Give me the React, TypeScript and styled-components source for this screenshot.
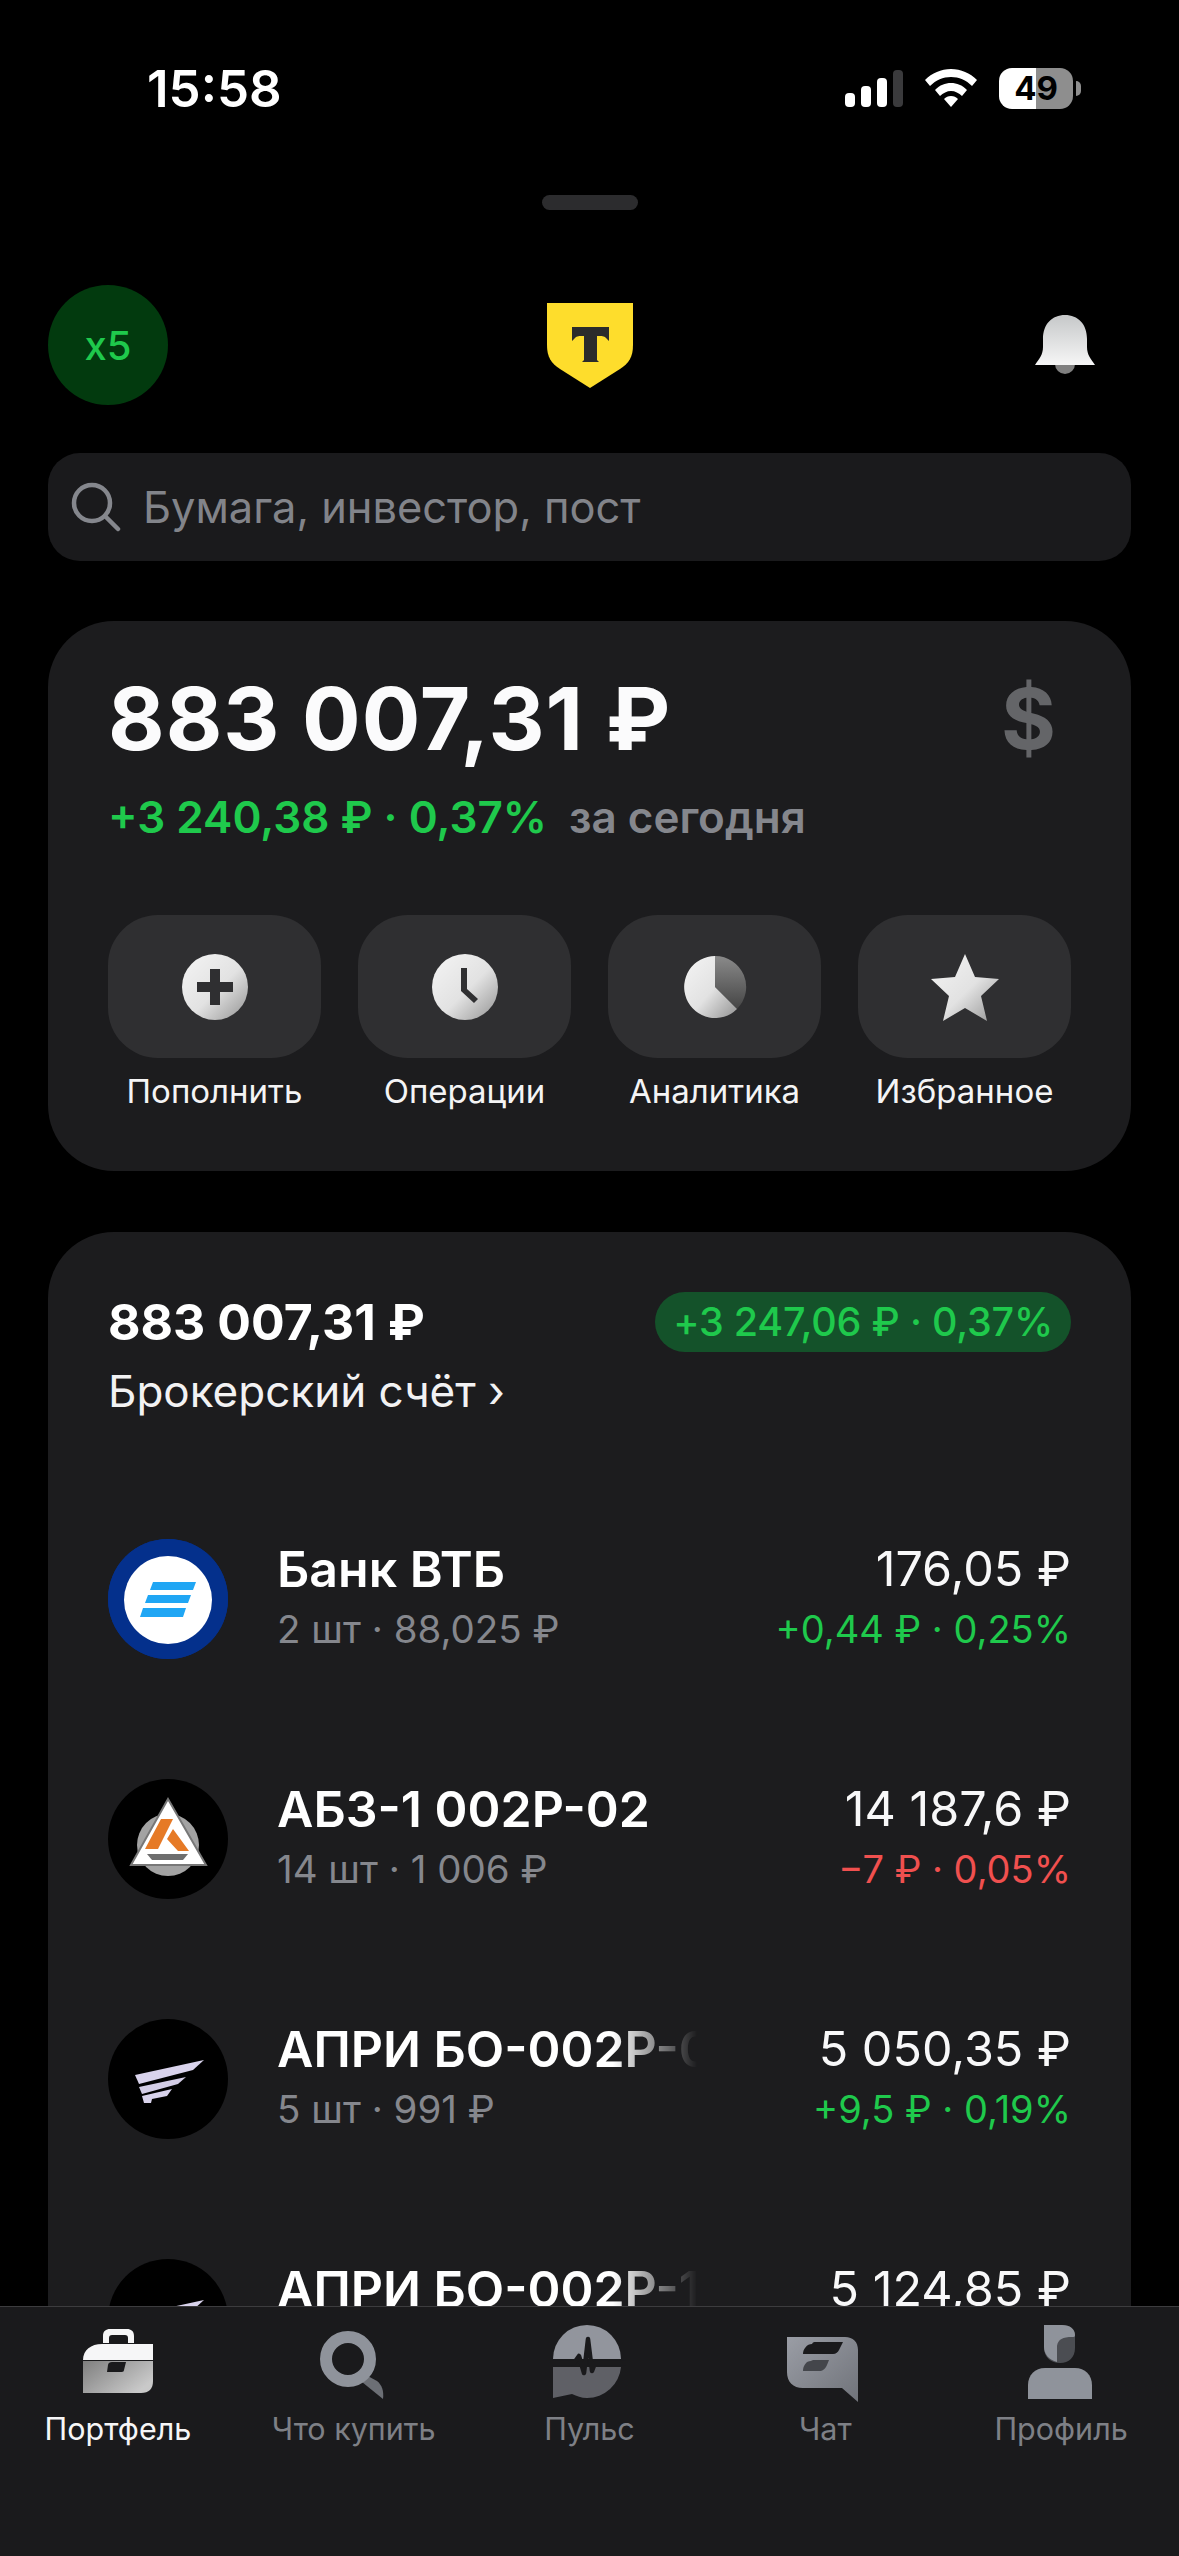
import { FC, ReactNode } from "react";
import styled, { createGlobalStyle } from "styled-components";

const GlobalStyle = createGlobalStyle`
  html, body {
    margin: 0;
    padding: 0;
    background: #000;
  }
  * {
    box-sizing: border-box;
  }
`;

const GREEN = "#1fc94c";
const RED = "#f0504f";
const GREY = "#85878d";

const Screen = styled.div`
  position: relative;
  width: 1179px;
  height: 2556px;
  overflow: hidden;
  background: #000;
  color: #fff;
  font-family: Inter, "Noto Sans", "Liberation Sans", sans-serif;
`;

const StatusBar = styled.div`
  display: flex;
  align-items: center;
  height: 88px;
  margin-top: 44px;
  padding: 0 106px 0 147px;
`;

const Time = styled.div`
  font-size: 51px;
  font-weight: 600;
  margin-right: auto;
`;

const Battery = styled.div`
  position: relative;
  width: 74px;
  height: 41px;
  margin-left: 22px;
  border-radius: 13px;
  background: linear-gradient(to right, #fff 50%, #8e8e8e 50%);
  color: #000;
  font-size: 33px;
  font-weight: 700;
  line-height: 41px;
  text-align: center;

  &::after {
    content: "";
    position: absolute;
    left: 77px;
    top: 13px;
    width: 5px;
    height: 15px;
    border-radius: 0 8px 8px 0;
    background: #8e8e8e;
  }
`;

const Handle = styled.div`
  width: 96px;
  height: 15px;
  margin: 63px auto 0;
  border-radius: 8px;
  background: #2c2c2e;
`;

const Header = styled.header`
  display: grid;
  grid-template-columns: 1fr auto 1fr;
  align-items: center;
  height: 120px;
  margin-top: 75px;
  padding: 0 48px;
`;

const Bonus = styled.div`
  display: flex;
  align-items: center;
  justify-content: center;
  width: 120px;
  height: 120px;
  border-radius: 50%;
  background: #023a0e;
  color: ${GREEN};
  font-size: 40px;
  font-weight: 500;
`;

const BellSlot = styled.div`
  display: flex;
  justify-content: flex-end;
  padding-right: 36px;
`;

const Search = styled.div`
  display: flex;
  align-items: center;
  gap: 22px;
  height: 108px;
  margin: 48px 48px 0;
  padding: 0 23px;
  border-radius: 32px;
  background: #1a1a1c;
  color: #82848a;
  font-size: 43.4px;
`;

const Card = styled.section<{ $top: number }>`
  margin: ${(p) => p.$top}px 48px 0;
  padding: 0 60px;
  border-radius: 66px;
  background: #1c1c1e;
`;

const TotalRow = styled.div`
  display: flex;
  align-items: center;
  justify-content: space-between;
  padding-top: 46px;
  padding-right: 15px;
`;

const Total = styled.div`
  font-size: 87px;
  font-weight: 700;
  line-height: 104px;
  letter-spacing: 1px;
  color: #fbfbfc;
`;

const Currency = styled.div`
  font-size: 84px;
  font-weight: 700;
  line-height: 104px;
  color: #646568;
`;

const TodayRow = styled.div`
  display: flex;
  gap: 22px;
  margin-top: 16px;
  font-size: 44px;
  font-weight: 600;
  line-height: 60px;
`;

const Change = styled.span<{ $color: string }>`
  color: ${(p) => p.$color};
`;

const Actions = styled.div`
  display: grid;
  grid-template-columns: repeat(4, 1fr);
  gap: 37px;
  margin-top: 68px;
  padding-bottom: 59px;
`;

const Action = styled.div`
  display: flex;
  flex-direction: column;
  align-items: center;
  gap: 12px;
`;

const ActionTile = styled.div`
  display: flex;
  align-items: center;
  justify-content: center;
  width: 100%;
  height: 143px;
  border-radius: 50px;
  background: #2f2f31;
`;

const ActionLabel = styled.div`
  font-size: 33px;
  line-height: 42px;
  color: #f4f4f5;
  white-space: nowrap;
`;

const AccountHead = styled.div`
  display: flex;
  align-items: flex-start;
  justify-content: space-between;
  padding-top: 60px;
`;

const AccountTotal = styled.div`
  font-size: 50px;
  font-weight: 700;
  line-height: 60px;
`;

const AccountName = styled.div`
  margin-top: 11px;
  font-size: 44px;
  line-height: 56px;
  color: #f2f2f3;
`;

const Pill = styled.div`
  height: 60px;
  padding: 0 18px;
  border-radius: 30px;
  background: #14522a;
  color: ${GREEN};
  font-size: 39.5px;
  font-weight: 500;
  line-height: 60px;
  letter-spacing: -0.2px;
  white-space: nowrap;
`;

const Holdings = styled.div`
  display: flex;
  flex-direction: column;
  gap: 120px;
  margin-top: 120px;
`;

const Row = styled.div`
  display: flex;
  align-items: center;
  height: 120px;
`;

const Logo = styled.div<{ $bg: string }>`
  display: flex;
  flex: none;
  align-items: center;
  justify-content: center;
  width: 120px;
  height: 120px;
  margin-right: 49px;
  border-radius: 50%;
  background: ${(p) => p.$bg};
`;

const RowText = styled.div`
  min-width: 0;
  flex: 1;
`;

const Name = styled.div<{ $fade?: boolean }>`
  max-width: 420px;
  overflow: hidden;
  font-size: 50px;
  font-weight: 600;
  line-height: 60px;
  white-space: nowrap;
  ${(p) =>
    p.$fade &&
    "mask-image: linear-gradient(to right, #000 80%, transparent 100%);"}
`;

const Sub = styled.div`
  font-size: 38.5px;
  line-height: 60px;
  color: ${GREY};
  white-space: nowrap;
`;

const RowValues = styled.div`
  flex: none;
  text-align: right;
`;

const Price = styled.div`
  font-size: 48.5px;
  line-height: 60px;
  color: #f8f8f9;
`;

const Delta = styled.div<{ $color: string }>`
  font-size: 38px;
  line-height: 60px;
  color: ${(p) => p.$color};
`;

const Nav = styled.nav`
  position: absolute;
  left: 0;
  right: 0;
  bottom: 0;
  display: grid;
  grid-template-columns: repeat(5, 1fr);
  height: 250px;
  padding-top: 17px;
  border-top: 1px solid #3c3c3e;
  background: #1a1a1c;
`;

const NavItem = styled.div`
  display: flex;
  flex-direction: column;
  align-items: center;
`;

const NavLabel = styled.div<{ $active?: boolean }>`
  margin-top: 5px;
  font-size: 30.5px;
  line-height: 40px;
  color: ${(p) => (p.$active ? "#f6f6f7" : "#7e8086")};
`;

const SignalIcon = () => (
  <svg width="58" height="37" viewBox="0 0 58 37">
    <rect x="0" y="23" width="10" height="14" rx="4" fill="#fff" />
    <rect x="16" y="16" width="10" height="21" rx="4" fill="#fff" />
    <rect x="32" y="8" width="10" height="29" rx="4" fill="#fff" />
    <rect x="48" y="0" width="10" height="37" rx="4" fill="#3a3a3c" />
  </svg>
);

const WifiIcon = () => (
  <svg width="52" height="38" viewBox="0 0 52 38" style={{ marginLeft: 22 }}>
    <path d="M26 0c10 0 19 4 26 11l-5 6C41 11 34 8 26 8S11 11 5 17L0 11C7 4 16 0 26 0z" fill="#fff" />
    <path d="M26 14c6 0 11 2 16 7l-5 6c-3-3-7-5-11-5s-8 2-11 5l-5-6c5-5 10-7 16-7z" fill="#fff" />
    <path d="M26 27c3 0 5 1 7 3l-7 8-7-8c2-2 4-3 7-3z" fill="#fff" />
  </svg>
);

const TinkoffLogo = () => (
  <svg width="86" height="85" viewBox="0 0 86 85">
    <path d="M0 0h86v42c0 12-4 18-13 24L43 85 13 66C4 60 0 54 0 42z" fill="#fedd2c" />
    <path d="M25 24h37v14l-3-3c-2-2-4-2-9-2v24l2 2H35l2-2V33c-5 0-7 0-9 2l-3 3z" fill="#2b2b2b" />
  </svg>
);

const BellIcon = () => (
  <svg width="60" height="60" viewBox="0 0 60 60">
    <defs>
      <linearGradient id="bell" x1="0" y1="0" x2="0" y2="1">
        <stop offset="0" stopColor="#c6c8c9" />
        <stop offset="1" stopColor="#f6f6f6" />
      </linearGradient>
    </defs>
    <circle cx="30" cy="49" r="10" fill="#808080" />
    <path d="M30 0c13 0 22 9 22 24v8c0 8 4 12 8 18H0c4-6 8-10 8-18v-8C8 9 17 0 30 0z" fill="url(#bell)" />
  </svg>
);

const SearchGlass = () => (
  <svg width="50" height="50" viewBox="0 0 50 50" fill="none" stroke="#85878d" strokeWidth="4.5" strokeLinecap="round">
    <circle cx="21" cy="21" r="18" />
    <path d="M34 34l13 13" />
  </svg>
);

const Metal: FC<{ id: string; children: ReactNode }> = ({ id, children }) => (
  <svg width="70" height="70" viewBox="0 0 70 70">
    <defs>
      <linearGradient id={id} x1="0.1" y1="0.1" x2="0.9" y2="0.9">
        <stop offset="0" stopColor="#f1f1f1" />
        <stop offset="0.55" stopColor="#e2e2e2" />
        <stop offset="1" stopColor="#a4a4a4" />
      </linearGradient>
      <linearGradient id="slice" x1="0" y1="0" x2="0" y2="1">
        <stop offset="0" stopColor="#8a8a8a" />
        <stop offset="1" stopColor="#454545" />
      </linearGradient>
    </defs>
    {children}
  </svg>
);

const PlusIcon = () => (
  <Metal id="plus">
    <circle cx="35" cy="35" r="33" fill="url(#plus)" />
    <path d="M30 17h10v13h13v10H40v13H30V40H17V30h13z" fill="#2f2f31" />
  </Metal>
);

const ClockIcon = () => (
  <Metal id="clock">
    <circle cx="35" cy="35" r="33" fill="url(#clock)" />
    <path d="M31 16h6v21l11 10-4 4-13-12z" fill="#2f2f31" />
  </Metal>
);

const PieIcon = () => (
  <Metal id="pie">
    <path d="M35 4a31 31 0 0 1 22 53L35 35z" fill="url(#slice)" />
    <path d="M35 4v31l22 22A31 31 0 1 1 35 4z" fill="url(#pie)" />
  </Metal>
);

const StarIcon = () => (
  <Metal id="star">
    <path d="M35 2l10 23 24 2-18 17 6 25-22-13-22 13 6-25L1 27l24-2z" fill="url(#star)" />
  </Metal>
);

const VtbLogo = () => (
  <svg width="120" height="120" viewBox="0 0 120 120">
    <circle cx="60" cy="60" r="60" fill="#04308c" />
    <circle cx="60" cy="61" r="44" fill="#fff" />
    <path d="M45 43h43l-3 8H42zM40 56h43l-3 8H37zM35 69h43l-3 9H32z" fill="#20a6f4" />
  </svg>
);

const AbzLogo = () => (
  <svg width="120" height="120" viewBox="0 0 120 120">
    <circle cx="60" cy="66" r="31" fill="#a3a3a3" />
    <path d="M60 20l38 66H23z" fill="#fff" stroke="#777" strokeWidth="2" />
    <path d="M53 40h12L50 70H37zM65 50l16 22H70L59 60z" fill="#e67a26" />
    <path d="M39 75h41l-5 6H44z" fill="#6e6e6e" />
  </svg>
);

const WingLogo = () => (
  <svg width="120" height="120" viewBox="0 0 120 120">
    <path d="M96 41L27 56l4 9 54-14z" fill="#d9d3ec" />
    <path d="M78 58L31 68l3 7 36-10z" fill="#d3cde6" />
    <path d="M64 70l-30 7 2 7h7l1-4 15-3z" fill="#d9d3ec" />
  </svg>
);

const BriefcaseIcon = () => (
  <svg width="80" height="80" viewBox="0 0 80 80">
    <defs>
      <linearGradient id="case" x1="0" y1="0" x2="1" y2="0.6">
        <stop offset="0" stopColor="#7f7f7f" />
        <stop offset="1" stopColor="#c9c9c9" />
      </linearGradient>
    </defs>
    <path d="M25 19v-7c0-5 3-7 7-7h17c4 0 7 2 7 7v7h-6v-5c0-2-1-3-3-3H34c-2 0-3 1-3 3v5z" fill="#f6f6f7" />
    <path d="M24 20h51v16H5c0-10 8-16 19-16z" fill="#f6f6f7" />
    <path d="M5 37h70v20c0 8-4 12-12 12H5z" fill="url(#case)" />
    <path d="M30 41c0-2 2-3 4-3h14l-2 8c0 2-2 2-4 2H29z" fill="#1a1a1c" />
  </svg>
);

const MagnifierIcon = () => (
  <svg width="80" height="80" viewBox="0 0 80 80">
    <path d="M50 50l13 7c5 4 7 10 6 18L48 58z" fill="#6c6f75" />
    <circle cx="34" cy="35" r="22" fill="none" stroke="#8f939b" strokeWidth="12" />
  </svg>
);

const PulseIcon = () => (
  <svg width="80" height="80" viewBox="0 0 80 80">
    <path d="M4 35a34 34 0 0 1 68 0z" fill="#92959d" />
    <path d="M4 43h68a34 34 0 0 1-34 31c-6 0-10-2-15-4L4 74z" fill="#5f6066" />
    <path d="M3 39h22l5-7 5 17 4-34 4 32 3-8h31" fill="none" stroke="#1a1a1c" strokeWidth="4.5" strokeLinejoin="round" />
  </svg>
);

const ChatIcon = () => (
  <svg width="80" height="80" viewBox="0 0 80 80">
    <defs>
      <linearGradient id="chat" x1="0" y1="0" x2="1" y2="1">
        <stop offset="0" stopColor="#9a9da5" />
        <stop offset="1" stopColor="#70737a" />
      </linearGradient>
    </defs>
    <path d="M2 13h58c8 0 13 5 13 13v52L57 64H18C8 64 2 58 2 48z" fill="url(#chat)" />
    <path d="M27 20c1-2 2-2 4-2h27l-4 8c-1 2-3 4-6 4H18c0-5 4-10 9-10z" fill="#1a1a1c" />
    <path d="M26 37c1-1 2-1 3-1h15l-2 5c-2 4-4 6-8 6H18c0-5 3-10 8-10z" fill="#44464b" />
  </svg>
);

const ProfileIcon = () => (
  <svg width="80" height="80" viewBox="0 0 80 80">
    <path d="M23 1h18c8 0 13 4 13 11v12c0 9-6 15-15 15-9 0-16-6-16-15z" fill="#4b4d52" />
    <path d="M23 1h18c8 0 13 4 13 10 0 2-1 2-3 2-9 0-14 2-15 9v16c-8-2-13-8-13-15z" fill="#8f939b" />
    <path d="M7 75V61c0-10 7-17 17-17h30c10 0 17 7 17 17v14z" fill="#8f939b" />
  </svg>
);

const actions = [
  { label: "Пополнить", icon: <PlusIcon /> },
  { label: "Операции", icon: <ClockIcon /> },
  { label: "Аналитика", icon: <PieIcon /> },
  { label: "Избранное", icon: <StarIcon /> },
];

const holdings = [
  { name: "Банк ВТБ", sub: "2 шт · 88,025 ₽", price: "176,05 ₽", delta: "+0,44 ₽ · 0,25%", color: GREEN, bg: "#04308c", logo: <VtbLogo /> },
  { name: "АБЗ-1 002Р-02", sub: "14 шт · 1 006 ₽", price: "14 187,6 ₽", delta: "−7 ₽ · 0,05%", color: RED, bg: "#000", logo: <AbzLogo /> },
  { name: "АПРИ БО-002Р-03", sub: "5 шт · 991 ₽", price: "5 050,35 ₽", delta: "+9,5 ₽ · 0,19%", color: GREEN, bg: "#000", logo: <WingLogo />, fade: true },
  { name: "АПРИ БО-002Р-10", sub: "5 шт · 1 012 ₽", price: "5 124,85 ₽", delta: "+4,1 ₽ · 0,08%", color: GREEN, bg: "#000", logo: <WingLogo />, fade: true },
];

const tabs = [
  { label: "Портфель", icon: <BriefcaseIcon />, active: true },
  { label: "Что купить", icon: <MagnifierIcon /> },
  { label: "Пульс", icon: <PulseIcon /> },
  { label: "Чат", icon: <ChatIcon /> },
  { label: "Профиль", icon: <ProfileIcon /> },
];

const App: FC = () => {
  return (
    <Screen>
      <GlobalStyle />
      <StatusBar>
        <Time>15:58</Time>
        <SignalIcon />
        <WifiIcon />
        <Battery>49</Battery>
      </StatusBar>
      <Handle />

      <Header>
        <Bonus>x5</Bonus>
        <TinkoffLogo />
        <BellSlot>
          <BellIcon />
        </BellSlot>
      </Header>

      <Search>
        <SearchGlass />
        Бумага, инвестор, пост
      </Search>

      {/* Total */}
      <Card $top={60}>
        <TotalRow>
          <Total>883 007,31 ₽</Total>
          <Currency>$</Currency>
        </TotalRow>
        <TodayRow>
          <Change $color={GREEN}>+3 240,38 ₽ · 0,37%</Change>
          <Change $color={GREY}>за сегодня</Change>
        </TodayRow>
        <Actions>
          {actions.map((action) => (
            <Action key={action.label}>
              <ActionTile>{action.icon}</ActionTile>
              <ActionLabel>{action.label}</ActionLabel>
            </Action>
          ))}
        </Actions>
      </Card>

      {/* Broker account */}
      <Card $top={61}>
        <AccountHead>
          <div>
            <AccountTotal>883 007,31 ₽</AccountTotal>
            <AccountName>Брокерский счёт ›</AccountName>
          </div>
          <Pill>+3 247,06 ₽ · 0,37%</Pill>
        </AccountHead>
        <Holdings>
          {holdings.map((item) => (
            <Row key={item.name}>
              <Logo $bg={item.bg}>{item.logo}</Logo>
              <RowText>
                <Name $fade={item.fade}>{item.name}</Name>
                <Sub>{item.sub}</Sub>
              </RowText>
              <RowValues>
                <Price>{item.price}</Price>
                <Delta $color={item.color}>{item.delta}</Delta>
              </RowValues>
            </Row>
          ))}
        </Holdings>
      </Card>

      <Nav>
        {tabs.map((tab) => (
          <NavItem key={tab.label}>
            {tab.icon}
            <NavLabel $active={tab.active}>{tab.label}</NavLabel>
          </NavItem>
        ))}
      </Nav>
    </Screen>
  );
};

export default App;
